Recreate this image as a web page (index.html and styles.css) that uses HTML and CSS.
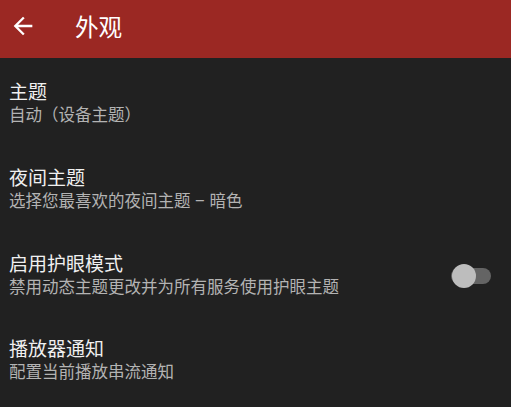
FILE: index.html
```
<!DOCTYPE html>
<html lang="zh-CN">
<head>
<meta charset="utf-8">
<title>外观</title>
<link rel="stylesheet" href="styles.css">
</head>
<body>
<header class="toolbar">
  <svg class="back" viewBox="0 0 24 24" width="28" height="28" aria-hidden="true"><path fill="#fff" d="M20 11H7.83l5.59-5.59L12 4l-8 8 8 8 1.41-1.41L7.83 13H20v-2z"/></svg>
  <h1 class="toolbar-title">外观</h1>
</header>
<main class="list">
  <div class="row">
    <div class="text">
      <div class="title">主题</div>
      <div class="summary">自动（设备主题）</div>
    </div>
  </div>
  <div class="row">
    <div class="text">
      <div class="title">夜间主题</div>
      <div class="summary">选择您最喜欢的夜间主题 – 暗色</div>
    </div>
  </div>
  <div class="row">
    <div class="text">
      <div class="title">启用护眼模式</div>
      <div class="summary">禁用动态主题更改并为所有服务使用护眼主题</div>
    </div>
    <div class="switch"><span class="track"></span><span class="thumb"></span></div>
  </div>
  <div class="row row-last">
    <div class="text">
      <div class="title">播放器通知</div>
      <div class="summary">配置当前播放串流通知</div>
    </div>
  </div>
</main>
</body>
</html>
```
FILE: styles.css
```
html, body {
  margin: 0;
  padding: 0;
  background: #212121;
  font-family: Roboto, "Noto Sans CJK SC", sans-serif;
  width: 511px;
  height: 407px;
  overflow: hidden;
}
.toolbar {
  height: 58px;
  box-sizing: border-box;
  padding: 0 0 6px 9px;
  background: #9b2823;
  display: flex;
  align-items: center;
}
.back {
  display: block;
  flex: none;
}
.toolbar-title {
  margin: 0 0 0 38px;
  padding-top: 4px;
  font-size: 23.6px;
  line-height: 30px;
  font-weight: 400;
  color: #fff;
}
.list {
  display: flex;
  flex-direction: column;
}
.row {
  height: 86px;
  box-sizing: border-box;
  padding: 23px 20px 17px 9px;
  display: flex;
  align-items: center;
}
.row-last {
  padding-top: 21px;
}
.text {
  flex: 1;
  display: flex;
  flex-direction: column;
}
.title {
  font-size: 19px;
  line-height: 24px;
  color: #f0f0f0;
}
.summary {
  font-size: 16.5px;
  line-height: 22px;
  color: #b3b3b3;
}
.switch {
  position: relative;
  width: 40px;
  height: 24px;
  flex: none;
}
.track {
  position: absolute;
  left: 0;
  top: 4px;
  width: 40px;
  height: 16px;
  border-radius: 8px;
  background: #646464;
}
.thumb {
  position: absolute;
  left: 1px;
  top: 0;
  width: 24px;
  height: 24px;
  border-radius: 50%;
  background: #bdbdbd;
}
```
